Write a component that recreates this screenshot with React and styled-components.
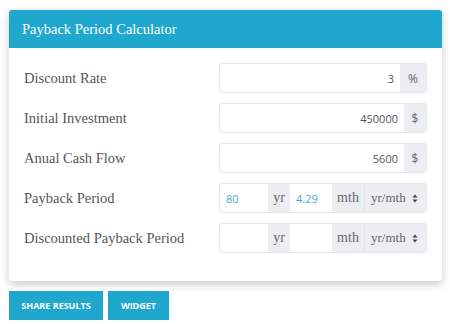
import React from 'react'
import styled, { createGlobalStyle } from 'styled-components'

const Global = createGlobalStyle`
  body {
    margin: 0;
    background: #fff;
  }
  * {
    box-sizing: border-box;
  }
`

const Page = styled.div`
  padding: 10px 8px 0 9px;
  width: 450px;
`

const Card = styled.div`
  background: #fff;
  border-radius: 3px;
  box-shadow: 0 3px 10px rgba(0, 0, 0, 0.22);
  overflow: hidden;
`

const Header = styled.div`
  background: #1fa7cd;
  color: #fff;
  height: 38px;
  display: flex;
  align-items: center;
  padding: 0 13px;
  font-family: "Liberation Serif", serif;
  font-size: 14.5px;
`

const Form = styled.div`
  display: flex;
  flex-direction: column;
  gap: 10px;
  padding: 15px 15px 28px 15px;
`

const Row = styled.div`
  display: grid;
  grid-template-columns: 195px 208px;
  align-items: center;
  height: 30px;
`

const Label = styled.div`
  font-family: "Liberation Serif", serif;
  font-size: 14.5px;
  color: #555;
`

const Group = styled.div`
  display: flex;
  height: 30px;
  border: 1px solid #e6e6e6;
  border-radius: 3px;
  overflow: hidden;
`

const Field = styled.div`
  flex: ${p => p.$w ? `0 0 ${p.$w}px` : '1'};
  display: flex;
  align-items: center;
  justify-content: ${p => p.$left ? 'flex-start' : 'flex-end'};
  padding: 0 6px;
  font-family: "Open Sans", sans-serif;
  font-size: 11px;
  color: ${p => p.$blue ? '#3fa9d6' : '#555'};
  background: #fff;
`

const Addon = styled.div`
  flex: 0 0 ${p => p.$w}px;
  display: flex;
  align-items: center;
  justify-content: center;
  background: #eceef1;
  color: #666;
  font-family: ${p => p.$serif ? '"Liberation Serif", serif' : '"Open Sans", sans-serif'};
  font-size: ${p => p.$serif ? '14px' : '12px'};
`

const Select = styled.div`
  flex: 1;
  display: flex;
  align-items: center;
  justify-content: space-between;
  padding: 0 8px 0 6px;
  background: #eceef1;
  border-left: 1px solid #e3e3e3;
  color: #666;
  font-family: "Liberation Serif", serif;
  font-size: 13px;
`

const Buttons = styled.div`
  display: flex;
  gap: 5px;
  margin-top: 10px;
`

const Button = styled.button`
  height: 29px;
  width: ${p => p.$w}px;
  padding: 0;
  border: none;
  background: #1fa7cd;
  color: #fff;
  font-family: "Open Sans", sans-serif;
  font-weight: 700;
  font-size: 9px;
`

const Arrows = () => (
  <svg width="6" height="9" viewBox="0 0 6 9">
    <path d="M3 0.5 L5.5 3.5 H0.5 Z M3 8.5 L5.5 5.5 H0.5 Z" fill="#444" />
  </svg>
)

export default function App() {
  return (
    <Page>
      <Global />
      <Card>
        <Header>Payback Period Calculator</Header>
        <Form>
          <Row>
            <Label>Discount Rate</Label>
            <Group>
              <Field>3</Field>
              <Addon $w={26}>%</Addon>
            </Group>
          </Row>
          <Row>
            <Label>Initial Investment</Label>
            <Group>
              <Field>450000</Field>
              <Addon $w={22}>$</Addon>
            </Group>
          </Row>
          <Row>
            <Label>Anual Cash Flow</Label>
            <Group>
              <Field>5600</Field>
              <Addon $w={22}>$</Addon>
            </Group>
          </Row>
          <Row>
            <Label>Payback Period</Label>
            <Group>
              <Field $w={48} $left $blue>80</Field>
              <Addon $w={22} $serif>yr</Addon>
              <Field $w={42} $left $blue>4.29</Field>
              <Addon $w={32} $serif>mth</Addon>
              <Select>yr/mth<Arrows /></Select>
            </Group>
          </Row>
          <Row>
            <Label>Discounted Payback Period</Label>
            <Group>
              <Field $w={48} $left />
              <Addon $w={22} $serif>yr</Addon>
              <Field $w={42} $left />
              <Addon $w={32} $serif>mth</Addon>
              <Select>yr/mth<Arrows /></Select>
            </Group>
          </Row>
        </Form>
      </Card>
      <Buttons>
        <Button $w={94}>SHARE RESULTS</Button>
        <Button $w={61}>WIDGET</Button>
      </Buttons>
    </Page>
  )
}
